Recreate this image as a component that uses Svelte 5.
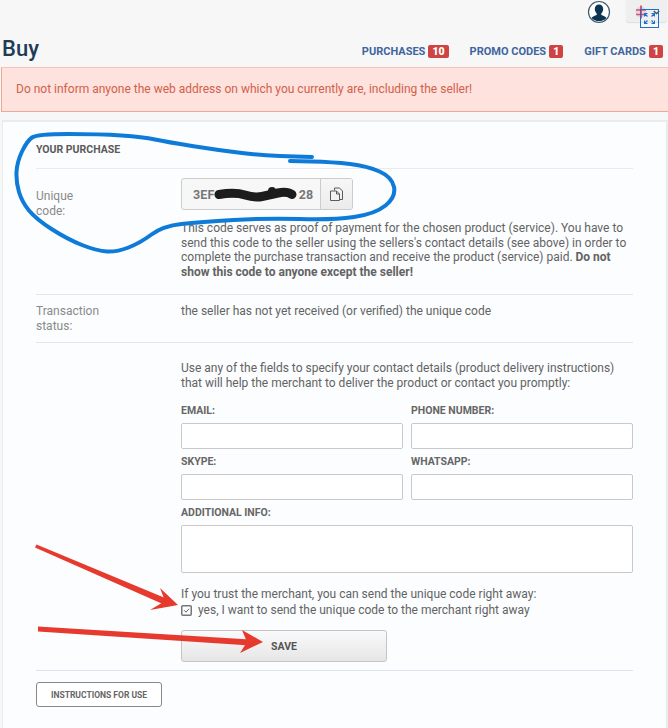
<script>
	const fields = [
		{ label: "EMAIL:" },
		{ label: "PHONE NUMBER:" },
		{ label: "SKYPE:" },
		{ label: "WHATSAPP:" },
	];
	const tabs = [
		{ label: "PURCHASES", count: 10 },
		{ label: "PROMO CODES", count: 1 },
		{ label: "GIFT CARDS", count: 1 },
	];

	// hand-drawn circle round the code, smoothed through midpoints
	const scribble = [
		[312, 157], [267, 156], [217, 150], [167, 142], [143, 137], [100, 134], [37, 134], [27, 141],
		[17, 162], [16, 182], [22, 202], [36, 219], [67, 239], [97, 251], [117, 252], [140, 243],
		[163, 226], [200, 222], [267, 218], [333, 220], [375, 214], [396, 197], [392, 177], [367, 166],
		[333, 162], [290, 161],
	];
	function smooth(pts) {
		let d = `M${pts[0][0]} ${pts[0][1]}`;
		for (let i = 1; i < pts.length - 1; i++) {
			const mx = (pts[i][0] + pts[i + 1][0]) / 2;
			const my = (pts[i][1] + pts[i + 1][1]) / 2;
			d += `Q${pts[i][0]} ${pts[i][1]} ${mx} ${my}`;
		}
		const last = pts[pts.length - 1];
		return d + `L${last[0]} ${last[1]}`;
	}
	const scribblePath = smooth(scribble);
</script>

<div class="page">
	<div class="top">
		<svg class="avatar" width="24" height="24" viewBox="0 0 24 24">
			<circle cx="12" cy="12" r="10.5" fill="#fff" stroke="#3c5a6e" stroke-width="1.2" />
			<path d="M12 4.500c-2.600 0-4.200 2-4.200 4.600 0 1.900.8 3.500 1.900 4.400v1.400c-2 .7-4.200 1.600-5.200 3.200a10.500 10.500 0 0 0 15 0c-1-1.600-3.200-2.500-5.200-3.200v-1.400c1.100-.9 1.900-2.500 1.900-4.400 0-2.600-1.600-4.600-4.200-4.600z" fill="#0d3450" />
		</svg>
		<div class="lang">
			<svg width="12" height="14" viewBox="0 0 12 14">
				<circle cx="6" cy="7" r="5.500" fill="#dfd8e4" />
				<path d="M1 5h10M1 9.500h10" stroke="#d9536b" stroke-width="1.500" />
				<path d="M6 .5v13" stroke="#d8323c" stroke-width="1.500" />
			</svg>
			<svg class="caret" width="7" height="5" viewBox="0 0 7 5"><path d="M.8 1l2.700 2.700L6.200 1" fill="none" stroke="#444" stroke-width="1.300" /></svg>
		</div>
		<div class="expand">
			<svg width="11" height="11" viewBox="0 0 11 11" fill="none" stroke="#1a6fd0" stroke-width="1.200">
				<path d="M.5 3.500v-3h3M.5 .5l3 3M7.500 .5h3v3M10.500 .5l-3 3M.5 7.500v3h3M.5 10.500l3-3M7.500 10.500h3v-3M10.500 10.500l-3-3" />
			</svg>
		</div>
	</div>

	<div class="head">
		<h1>Buy</h1>
		<nav>
			{#each tabs as tab}
				<span class="tab">{tab.label}<b>{tab.count}</b></span>
			{/each}
		</nav>
	</div>

	<div class="alert">Do not inform anyone the web address on which you currently are, including the seller!</div>

	<div class="card">
		<h2>YOUR PURCHASE</h2>

		<div class="row first">
			<div class="key">Unique<br />code:</div>
			<div class="val">
				<div class="code">
					<span class="code-text">3EF<i></i>28</span>
					<span class="copy">
						<svg width="16" height="16" viewBox="0 0 16 16" fill="none" stroke="#5a5a5a" stroke-width="1">
							<path d="M5.500 4.500V2h5l3 3v8.500h-2.500" />
							<path d="M1.500 5h6l3 3v6.500h-9z" fill="#f3f3f3" />
							<path d="M7.500 5v3h3" />
						</svg>
					</span>
				</div>
				<p class="desc">This code serves as proof of payment for the chosen product (service). You have to send this code to the seller using the sellers's contact details (see above) in order to complete the purchase transaction and receive the product (service) paid. <strong>Do not show this code to anyone except the seller!</strong></p>
			</div>
		</div>

		<div class="row status">
			<div class="key">Transaction<br />status:</div>
			<div class="val">the seller has not yet received (or verified) the unique code</div>
		</div>

		<div class="row contact">
			<div class="val">
				<p class="intro">Use any of the fields to specify your contact details (product delivery instructions) that will help the merchant to deliver the product or contact you promptly:</p>
				<div class="grid">
					{#each fields as field}
						<label>
							<span>{field.label}</span>
							<input type="text" />
						</label>
					{/each}
					<label class="wide">
						<span>ADDITIONAL INFO:</span>
						<textarea></textarea>
					</label>
				</div>
				<p class="trust">If you trust the merchant, you can send the unique code right away:</p>
				<div class="check">
					<svg width="11" height="11" viewBox="0 0 11 11" fill="none">
						<rect x=".75" y=".75" width="9.500" height="9.500" rx="1" stroke="#777" stroke-width="1.500" />
						<path d="M3 5.200l2 2 3-3.400" stroke="#666" stroke-width="1" />
					</svg>
					<span>yes, I want to send the unique code to the merchant right away</span>
				</div>
				<button class="save">SAVE</button>
			</div>
		</div>

		<div class="foot">
			<button class="instr">INSTRUCTIONS FOR USE</button>
		</div>
	</div>

	<svg class="marks" width="668" height="728" viewBox="0 0 668 728" fill="none">
		<path d={scribblePath} stroke="#0f7bd8" stroke-width="4" stroke-linecap="round" stroke-linejoin="round" />
		<path d="M219 194.500Q235 192 245 195T262 196.500T278 193T292 194.500" stroke="#1c1c1c" stroke-width="9" stroke-linecap="round" />
		<path d="M272 191v1" stroke="#1c1c1c" stroke-width="8" stroke-linecap="round" />
		<g fill="#e63a2e">
			<path d="M35 547.500l1.500-3 131 54.500-2.500 6z" />
			<path d="M178 605l-18-17 5 13-15 9z" />
			<path d="M38 626.500l212 13v6L38 631.500z" />
			<path d="M263 642l-21-12 5 12-7 11z" />
		</g>
	</svg>
</div>

<style>
	:global(body) {
		margin: 0;
		background: #f7f7f7;
	}
	.page {
		position: relative;
		width: 668px;
		height: 728px;
		overflow: hidden;
		font-family: Roboto, "Liberation Sans", sans-serif;
		font-size: 12px;
		line-height: 15px;
		color: #636363;
	}
	.top {
		position: relative;
		display: flex;
		justify-content: flex-end;
		align-items: flex-start;
		gap: 15px;
		height: 34px;
		padding-right: 1px;
	}
	.lang {
		position: relative;
		width: 41px;
		height: 22px;
		background: #efefef;
		border-radius: 0 0 3px 3px;
		box-shadow: 0 1px 1px #ddd;
		padding: 5px 0 0 9px;
		box-sizing: border-box;
	}
	.caret {
		position: absolute;
		left: 27px;
		top: 10px;
	}
	.expand {
		position: absolute;
		left: 640px;
		top: 9px;
		width: 19px;
		height: 19px;
		box-sizing: border-box;
		border: 1px solid #1a6fd0;
		padding: 3px;
		display: flex;
	}
	.head {
		display: flex;
		justify-content: space-between;
		align-items: flex-start;
		height: 33px;
	}
	h1 {
		margin: 0 0 0 2px;
		font-size: 22px;
		line-height: 30px;
		font-weight: 500;
		color: #1f3c56;
	}
	nav {
		display: flex;
		gap: 21px;
		margin-top: 10px;
		padding-right: 5px;
	}
	.tab {
		display: flex;
		align-items: center;
		gap: 3px;
		font-size: 11px;
		font-weight: 700;
		color: #40659f;
		height: 14px;
	}
	.tab b {
		background: #d04343;
		color: #fff;
		border-radius: 2px;
		font-size: 10.5px;
		line-height: 13px;
		padding: 0 4px;
	}
	.alert {
		box-sizing: border-box;
		height: 45px;
		margin-left: 1px;
		padding-left: 14px;
		display: flex;
		align-items: center;
		background: #fee2dd;
		border: 1px solid #efa896;
		border-top-color: #f6c4ba;
		border-right: none;
		color: #d2604a;
		font-size: 12px;
	}
	.card {
		box-sizing: border-box;
		margin: 8px 0 0 2px;
		width: 666px;
		height: 620px;
		background: #fbfdfe;
		border: 1px solid #e8eced;
		border-width: 2px 2px 0 1px;
		padding: 0 33px 0 33px;
	}
	h2 {
		margin: 0;
		height: 47px;
		box-sizing: border-box;
		padding-top: 21px;
		border-bottom: 1px solid #e6ebf1;
		font-size: 10.5px;
		line-height: 13px;
		font-weight: 700;
		color: #5a5a5a;
	}
	.row {
		display: flex;
		border-bottom: 1px solid #e3e6ea;
	}
	.key {
		width: 145px;
		flex: none;
		color: #8a8a8a;
	}
	.val {
		flex: 1;
		min-width: 0;
	}
	.first {
		height: 126px;
		padding-top: 9px;
		box-sizing: border-box;
	}
	.first .key {
		padding-top: 11px;
	}
	.code {
		display: flex;
		width: 172px;
		height: 32px;
		box-sizing: border-box;
		border: 1px solid #ccc;
		border-radius: 3px;
		background: #f7f7f7;
	}
	.code-text {
		flex: 1;
		display: flex;
		align-items: center;
		padding-left: 11px;
		font-weight: 700;
		color: #777;
		font-size: 12.5px;
		letter-spacing: 0.2px;
	}
	.code-text i {
		width: 84px;
	}
	.copy {
		width: 31px;
		border-left: 1px solid #ccc;
		background: linear-gradient(#f7f7f7, #ebebeb);
		display: flex;
		align-items: center;
		justify-content: center;
		border-radius: 0 2px 2px 0;
	}
	p {
		margin: 0;
	}
	.desc {
		width: 452px;
		margin-top: 11px;
		line-height: 14.5px;
	}
	.status {
		height: 48px;
		box-sizing: border-box;
		padding-top: 9px;
	}
	.contact {
		height: 328px;
		box-sizing: border-box;
		padding: 18px 0 0 145px;
		border-bottom-color: #dde2ef;
	}
	.intro {
		width: 450px;
	}
	.grid {
		display: grid;
		grid-template-columns: 222px 222px;
		gap: 6px 8px;
		margin-top: 13px;
		width: 452px;
	}
	label {
		display: flex;
		flex-direction: column;
		gap: 6px;
	}
	label span {
		padding-top: 1px;
		font-size: 10.5px;
		line-height: 12px;
		font-weight: 700;
		color: #666;
	}
	input,
	textarea {
		display: block;
		box-sizing: border-box;
		width: 100%;
		height: 26px;
		margin: 0;
		padding: 0;
		background: #fff;
		border: 1px solid #c9c9c9;
		border-radius: 2px;
		resize: none;
	}
	.wide {
		grid-column: 1 / 3;
	}
	textarea {
		height: 48px;
	}
	.trust {
		margin-top: 14px;
	}
	.check {
		display: flex;
		align-items: center;
		gap: 6px;
		margin-top: 1px;
	}
	.save {
		display: block;
		width: 206px;
		height: 32px;
		margin-top: 12px;
		border: 1px solid #c4c4c4;
		border-radius: 3px;
		background: linear-gradient(#fafafa, #e6e6e6);
		font: 700 10.5px Roboto, sans-serif;
		color: #555;
	}
	.foot {
		padding-top: 11px;
	}
	.instr {
		width: 126px;
		height: 25px;
		padding: 0;
		border: 1px solid #888;
		border-radius: 3px;
		background: #fff;
		font: 700 8.5px Roboto, sans-serif;
		color: #666;
	}
	.marks {
		position: absolute;
		left: 0;
		top: 0;
		pointer-events: none;
	}
</style>
